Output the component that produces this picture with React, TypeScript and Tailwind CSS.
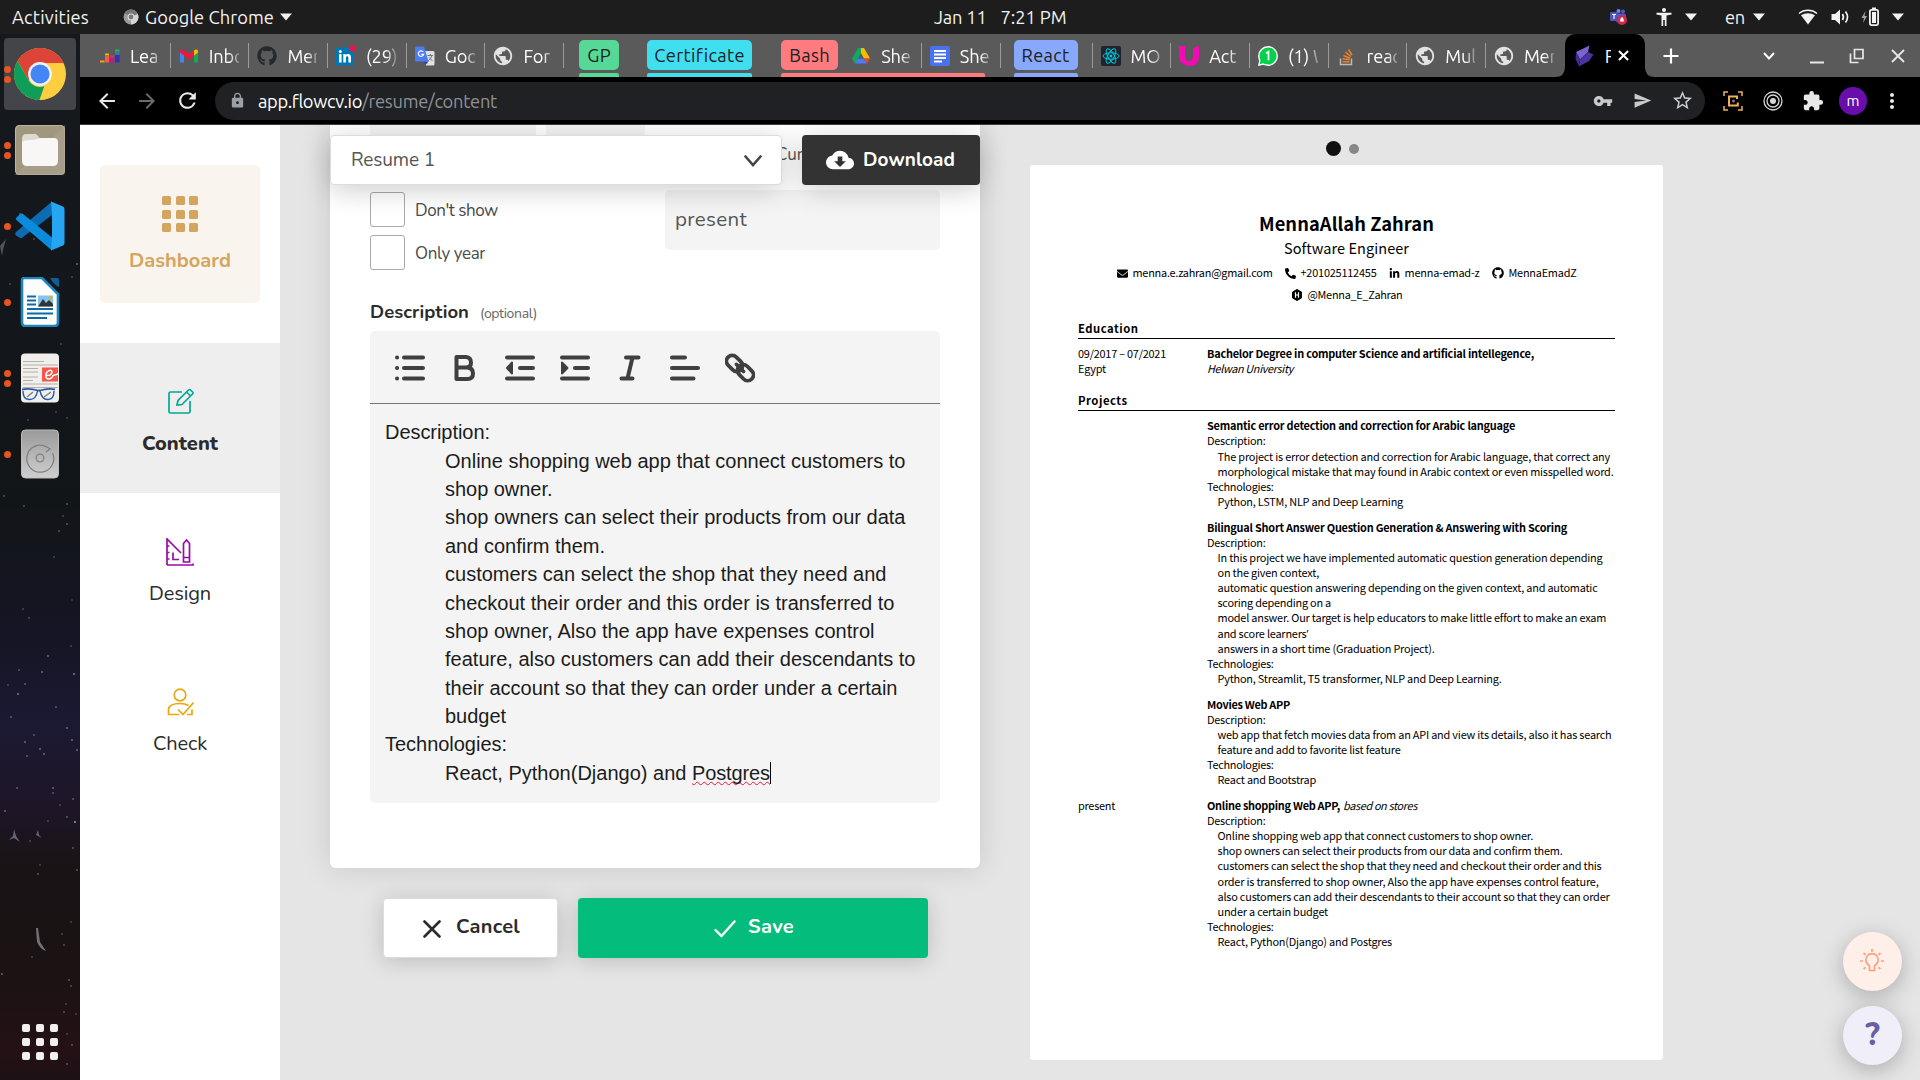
import { useLayoutEffect, useRef, useState } from "react";
import type { ReactNode } from "react";
import { FaGithub, FaPhoneAlt, FaLinkedinIn, FaEnvelope } from "react-icons/fa";
import {
  MdVpnKey,
  MdSend,
  MdStarBorder,
  MdExtension,
  MdMoreVert,
  MdLock,
  MdArrowBack,
  MdArrowForward,
  MdRefresh,
  MdPublic,
  MdCloudDownload,
} from "react-icons/md";

const UI = "font-['Nunito',Lato,sans-serif]";
const SYS = "font-['Ubuntu','Noto_Sans',sans-serif]";
const CV = "font-['Noto_Sans_CJK_SC',sans-serif]";

/* Single line of text whose tracking is adjusted so that it fills `w` pixels. */
function Fit({ w, className = "", children }: { w: number; className?: string; children: string }) {
  const ref = useRef<HTMLSpanElement>(null);
  const [ls, setLs] = useState(0);
  useLayoutEffect(() => {
    const el = ref.current;
    if (!el) return;
    el.style.letterSpacing = "0px";
    const natural = el.getBoundingClientRect().width;
    const next = (w - natural) / children.length;
    el.style.letterSpacing = `${next}px`;
    setLs(next);
  }, [w, children]);
  return (
    <span ref={ref} className={`inline-block whitespace-pre ${className}`} style={{ letterSpacing: `${ls}px` }}>
      {children}
    </span>
  );
}

function Caret({ className = "" }: { className?: string }) {
  return (
    <svg viewBox="0 0 12 8" className={`h-[8px] w-[12px] shrink-0 ${className}`}>
      <path d="M0 0.5H12L6 7.5Z" fill="#f2f2f2" />
    </svg>
  );
}

function TopBar() {
  return (
    <header className={`relative flex h-[34px] items-center bg-[#1d1d1d] text-[18.300px] leading-[34px] text-[#f2f2f2] ${SYS}`}>
      <Fit w={77} className="ml-[12px]">Activities</Fit>
      <svg viewBox="0 0 16 16" className="ml-[34px] h-[16px] w-[16px]">
        <circle cx="8" cy="8" r="7.5" fill="#9a9a9a" />
        <path d="M8 8L1.5 4A7.5 7.5 0 0 1 14.8 5Z" fill="#777" />
        <path d="M8 8L14.8 5A7.5 7.5 0 0 1 8 15.5Z" fill="#d5d5d5" />
        <circle cx="8" cy="8" r="3.5" fill="#ddd" />
        <circle cx="8" cy="8" r="2.4" fill="#777" />
      </svg>
      <Fit w={129} className="ml-[6px]">Google Chrome</Fit>
      <Caret className="ml-[6px]" />
      <div className="absolute left-[934px] top-0 flex gap-[14px]">
        <Fit w={52.5}>Jan 11</Fit>
        <Fit w={66}>7:21 PM</Fit>
      </div>
      <div className="ml-auto flex items-center pr-[16px]">
        <svg viewBox="0 0 18 16" className="h-[16px] w-[18px]">
          <circle cx="13" cy="2.6" r="2" fill="#5059c9" />
          <circle cx="8.5" cy="2" r="2" fill="#7b83eb" />
          <rect x="6" y="4.5" width="10" height="9" rx="2" fill="#5059c9" />
          <rect x="0" y="3" width="8" height="9" rx="1" fill="#4b53bc" />
          <path d="M2 5.5H6M4 5.5V10" stroke="#fff" strokeWidth="1.1" />
          <circle cx="12" cy="11" r="5" fill="#d0294a" />
          <path d="M9.8 12.6C10.5 12 10.2 8.3 12 8.3S13.5 12 14.2 12.6Z" fill="#fff" />
        </svg>
        <svg viewBox="0 0 16 18" className="ml-[28px] h-[18px] w-[16px]" fill="#f2f2f2">
          <circle cx="8" cy="2" r="2" />
          <path d="M0.5 4.8H15.5V6.6L10.5 7.4V18H8.8V12H7.2V18H5.5V7.4L0.5 6.6Z" />
        </svg>
        <Caret className="ml-[13px]" />
        <Fit w={20} className="ml-[28px]">en</Fit>
        <Caret className="ml-[8px]" />
        <svg viewBox="0 0 20 16" className="ml-[33px] h-[16px] w-[20px]">
          <path d="M1 4.5C6 0.2 14 0.2 19 4.5" fill="none" stroke="#f2f2f2" strokeWidth="1.6" />
          <path d="M3 6.3C7 3.4 13 3.4 17 6.3L10 15.5Z" fill="#f2f2f2" />
        </svg>
        <svg viewBox="0 0 20 16" className="ml-[13px] h-[16px] w-[20px]">
          <path d="M0.5 5H4L9 0.5V15.5L4 11H0.5Z" fill="#f2f2f2" />
          <path d="M11.5 5Q13.3 8 11.5 11M14.5 2.5Q18.5 8 14.5 13.5" fill="none" stroke="#f2f2f2" strokeWidth="1.7" />
        </svg>
        <svg viewBox="0 0 20 20" className="ml-[10px] h-[20px] w-[20px]">
          <path d="M4.5 4L0.5 11H3L2 16L6 9H3.5Z" fill="#a5a5a5" />
          <rect x="8.9" y="2.9" width="8.2" height="15.2" rx="1.5" fill="none" stroke="#f2f2f2" strokeWidth="1.8" />
          <rect x="11" y="5" width="4" height="11" fill="#f2f2f2" />
          <rect x="11" y="0.5" width="4" height="2" fill="#f2f2f2" />
        </svg>
        <Caret className="ml-[11px]" />
      </div>
    </header>
  );
}

/* ---------- Dock ---------- */

function ChromeLogo() {
  return (
    <svg viewBox="0 0 48 48" className="h-[52px] w-[52px]">
      <circle cx="24" cy="24" r="24" fill="#ffcd40" />
      <path d="M3.2 12A24 24 0 0 1 44.8 12L46 14H24L13.6 30Z" fill="#db4437" />
      <path d="M3.2 12L13.6 30A12 12 0 0 0 28 35.3L23.5 48A24 24 0 0 1 3.2 12Z" fill="#0f9d58" />
      <path d="M44.8 14H24V24L34 29L23.5 48A24 24 0 0 0 44.8 14Z" fill="#ffcd40" />
      <circle cx="24" cy="24" r="11" fill="#f1f1f1" />
      <circle cx="24" cy="24" r="8.8" fill="#4285f4" />
    </svg>
  );
}

function FilesIcon() {
  return (
    <svg viewBox="0 0 50 50" className="h-[50px] w-[50px]">
      <rect x="0.5" y="0.5" width="49" height="49" rx="3.5" fill="#a1977f" stroke="#bdb5a2" />
      <path d="M0 50L50 0V46.5Q50 50 46.5 50Z" fill="#aba28d" opacity=".6" />
      <path d="M7 14Q7 9 11 9H20Q22 9 23 11L25 14H33V24H7Z" fill="#dedad0" />
      <path d="M7 18Q7 16 10 15.5L21 14.5L25 13H39Q43 13 43 17V36Q43 41 38 41H12Q7 41 7 36Z" fill="#f8f7f5" />
    </svg>
  );
}

function CodeIcon() {
  return (
    <svg viewBox="0 0 50 50" className="h-[50px] w-[50px]">
      <path d="M1 31L37 0.5V14L6 37.5L1 34.5Q-0.5 33 1 31Z" fill="#0b6cb4" />
      <path d="M1 17L5.5 12.6Q7 12 8 13L37 36.5V49.5L2 19.5Q0 18 1 17Z" fill="#0a8bdc" />
      <path d="M36 0.5L48 5.5Q49.5 6.2 49.5 8V42Q49.5 43.8 48 44.5L36 49.5L37 37V14Z" fill="#25a5f2" />
    </svg>
  );
}

function WriterIcon() {
  return (
    <svg viewBox="0 0 40 50" className="h-[50px] w-[40px]">
      <path d="M4 1H22L38 17V45Q38 49 34.5 49H5Q2 49 2 45V4Q2 1 4 1Z" fill="#fdfdfd" stroke="#1c86bf" strokeWidth="2.6" />
      <path d="M30 1H37Q39 1 39 3V10Q34 8 30 1Z" fill="#0e5f95" />
      <path d="M7 19.5H16M7 23.5H16M7 27.5H16M7 32H33M7 36.5H33M7 41H27" stroke="#0e6ba8" strokeWidth="1.8" />
      <rect x="18" y="18.5" width="15" height="11" fill="#84c4ee" />
      <path d="M18 29.5L23 22L26 26L29 23L33 27V29.5Z" fill="#333" />
      <circle cx="30.5" cy="20.5" r="1.8" fill="#e8b500" />
    </svg>
  );
}

function EvinceIcon() {
  return (
    <svg viewBox="0 0 40 50" className="h-[50px] w-[40px]">
      <rect x="1" y="0.5" width="38" height="49" rx="4" fill="#f1efed" />
      <path d="M3 8.5H24M3 12H38M3 15.5H18M3 19H18M3 24H18M3 27.5H13M3 31H38M3 34.5H38" stroke="#b5afa5" strokeWidth="1.2" />
      <rect x="22" y="14.5" width="16" height="14" fill="#f3564b" />
      <path d="M25 22.5Q32 23 32 19Q31 15.5 27 19Q24 24 28 26Q32 26 33 22.5L38 21" fill="none" stroke="#fff" strokeWidth="1.5" />
      <path d="M2 36.5Q10 35 18 37.5H20Q28 35 35 36.5" fill="none" stroke="#2c5aa8" strokeWidth="1.8" />
      <path d="M3 38Q3 46.5 9 46.5Q16 47 17.5 38M20 38Q22 47 28 46.5Q34 46.5 34 38" fill="none" stroke="#2c5aa8" strokeWidth="1.4" />
      <path d="M7 44L13 39M24 44L31 39" stroke="#777" strokeWidth="1.2" />
    </svg>
  );
}

function DiskIcon() {
  return (
    <svg viewBox="0 0 40 50" className="h-[50px] w-[40px]">
      <defs>
        <linearGradient id="disk" x1="0" x2="0" y1="0" y2="1">
          <stop offset="0" stopColor="#9a9a9a" />
          <stop offset="1" stopColor="#cfcfcf" />
        </linearGradient>
      </defs>
      <rect x="1.5" y="1" width="37" height="48" rx="4" fill="url(#disk)" stroke="#bbb" />
      <path d="M32.500 24A13.500 13.500 0 1 1 27 18L30 20L26 23" fill="none" stroke="#808080" strokeWidth="1.3" />
      <circle cx="20" cy="29" r="3.8" fill="none" stroke="#808080" strokeWidth="1.3" />
    </svg>
  );
}

function DockItem({ dots, active, children }: { dots: number; active?: boolean; children: ReactNode }) {
  return (
    <div className="relative flex h-[76px] w-[80px] items-center justify-center">
      <div className={`flex h-[72px] w-[72px] items-center justify-center rounded-[4px] ${active ? "bg-[#434548]" : ""}`}>
        {children}
      </div>
      <div className="absolute left-[4px] top-0 flex h-full flex-col justify-center gap-[3px]">
        {Array.from({ length: dots }, (_, i) => (
          <span key={i} className="h-[7px] w-[7px] rounded-full bg-[#e95420]" />
        ))}
      </div>
    </div>
  );
}

const STARS = [
  [12, 20, 0.3], [62, 26, 0.25], [40, 119, 0.4], [20, 180, 0.35], [34, 205, 0.3], [77, 230, 0.5], [72, 243, 0.3], [10, 250, 0.3],
  [33, 264, 0.3], [61, 310, 0.3], [56, 378, 0.3], [28, 386, 0.3], [67, 384, 0.3], [4, 462, 0.35], [24, 472, 0.35], [67, 470, 0.4],
  [63, 482, 0.3], [67, 490, 0.4], [59, 497, 0.35], [54, 523, 0.3], [72, 566, 0.25], [23, 575, 0.3], [29, 584, 0.35], [71, 612, 0.3],
  [48, 622, 0.5], [19, 636, 0.4], [42, 638, 0.5], [74, 640, 0.6], [8, 651, 0.3], [25, 650, 0.4], [18, 660, 0.6], [56, 673, 0.4],
  [11, 683, 0.4], [67, 694, 0.5], [34, 701, 0.4], [25, 708, 0.5], [40, 715, 0.5], [72, 706, 0.5], [27, 722, 0.4], [44, 720, 0.5],
  [77, 716, 0.5], [17, 754, 0.4], [53, 754, 0.5], [53, 759, 0.4], [73, 765, 0.4], [60, 771, 0.3], [5, 777, 0.5], [67, 783, 0.4],
  [75, 788, 0.8], [48, 787, 0.3], [30, 807, 0.3], [73, 814, 0.4], [40, 831, 0.3], [38, 840, 0.4], [77, 836, 0.4], [71, 888, 0.3],
  [62, 900, 0.3], [64, 911, 0.35], [2, 940, 0.5], [69, 946, 0.4], [71, 952, 0.35], [66, 970, 0.3], [64, 978, 0.4], [76, 980, 0.3],
  [67, 1000, 0.3], [72, 1011, 0.4], [67, 1030, 0.4], [32, 923, 0.3],
];

function Dock() {
  return (
    <aside className="relative flex h-full w-[80px] shrink-0 flex-col bg-[linear-gradient(180deg,#15191d_0%,#121518_45%,#161525_58%,#1b1933_66%,#1e1629_73%,#191315_80%,#1a1213_90%,#241116_97%,#1d1115_100%)] pt-[2px]">
      <svg viewBox="0 0 80 1046" className="absolute left-0 top-0 h-[1046px] w-[80px]">
        {STARS.map(([x, y, o], i) => (
          <circle key={i} cx={x} cy={y} r="0.9" fill="#c9cbe8" opacity={o} />
        ))}
        <path d="M36 894L38 894L40 908L46 917Q40 915 37 908Z" fill="#8a8a90" opacity=".8" />
        <path d="M14 795L16 802L20 808L14 804L9 806L13 802ZM38 796L39 801L42 804L36 801Z" fill="#85859a" opacity=".7" />
        <path d="M0 212L6 205L3 216L2 222Z" fill="#8a9498" opacity=".5" />
      </svg>
      <DockItem dots={2} active><ChromeLogo /></DockItem>
      <DockItem dots={2}><FilesIcon /></DockItem>
      <DockItem dots={1}><CodeIcon /></DockItem>
      <DockItem dots={1}><WriterIcon /></DockItem>
      <DockItem dots={2}><EvinceIcon /></DockItem>
      <DockItem dots={1}><DiskIcon /></DockItem>
      <div className="relative mb-[20px] ml-[22px] mt-auto grid w-[36px] grid-cols-3 gap-[6px]">
        {Array.from({ length: 9 }, (_, i) => (
          <span key={i} className="h-[8px] w-[8px] rounded-[2px] bg-[#f0f0f0]" />
        ))}
      </div>
    </aside>
  );
}

/* ---------- Browser chrome ---------- */

const tabIcons: Record<string, ReactNode> = {
  deezer: (
    <svg viewBox="0 0 20 20" className="h-[20px] w-[20px]">
      <path d="M0 14.5H4.5V16.5H0Z" fill="#ff9a1f" />
      <path d="M5 10H9V16.5H5Z" fill="#f0603a" />
      <path d="M5 7.5H9V9.5H5Z" fill="#f7b500" />
      <path d="M10 12H14V16.5H10Z" fill="#c2159a" />
      <path d="M10 9.5H14V11.5H10Z" fill="#e0306a" />
      <path d="M15 9H19.5V16.5H15Z" fill="#3b2fb0" />
      <path d="M15 6H19.5V8.5H15Z" fill="#2a7fc0" />
      <path d="M15 3.5H19.5V5.5H15Z" fill="#1fb85a" />
    </svg>
  ),
  gmail: (
    <svg viewBox="0 0 20 20" className="h-[20px] w-[20px]">
      <path d="M1 5V16.500H5V9Z" fill="#4285f4" />
      <path d="M15 9V16.500H19V5Z" fill="#17a853" />
      <path d="M15 9.500L19 6.500V5Q18 2.500 15 4.500Z" fill="#fbbc04" />
      <path d="M1 5Q2 2.500 5 4.500L10 8.300L15 4.500V9.500L10 13.300L5 9.500L1 6.500Z" fill="#f5123d" />
    </svg>
  ),
  github: <FaGithub className="h-[20px] w-[20px] text-[#24292e]" />,
  linkedin: (
    <svg viewBox="0 0 20 20" className="h-[20px] w-[20px] overflow-visible">
      <rect x="0" y="1.5" width="18" height="18" rx="1.5" fill="#0077b5" />
      <path d="M3 8H5.600V16.500H3ZM7.300 8H9.800V9.200C10.800 7.200 15 7.200 15 11.200V16.500H12.400V12C12.400 9.600 9.900 9.800 9.900 12V16.500H7.300Z" fill="#fff" />
      <circle cx="4.3" cy="5.4" r="1.5" fill="#fff" />
      <circle cx="16.5" cy="2.5" r="3" fill="#f5123d" />
    </svg>
  ),
  translate: (
    <svg viewBox="0 0 20 20" className="h-[20px] w-[20px]">
      <path d="M8 5H18Q19.500 5 19.500 6.500V18Q19.500 19.500 18 19.500H11Z" fill="#e0e0e0" />
      <path d="M12.500 9.500H18M15.300 8V9.500M17 9.500Q16 13 13 15M14 11.500L17.500 15" stroke="#6b7787" strokeWidth="1" fill="none" />
      <path d="M1.500 0.500H9L13.500 15.500H1.500Q0 15.500 0 14V2Q0 0.500 1.500 0.500Z" fill="#4b7cf3" />
      <path d="M9.500 15.500H13.500L10.500 19Z" fill="#3b2fb0" />
      <path d="M8.300 6A2.700 2.700 0 1 0 8.700 8.300H6.300" fill="none" stroke="#fff" strokeWidth="1.2" />
    </svg>
  ),
  globe: <MdPublic className="h-[22px] w-[22px] shrink-0 text-[#e3e3e3]" />,
  drive: (
    <svg viewBox="0 0 20 20" className="h-[20px] w-[20px]">
      <path d="M7 2H13L19 12.500H13Z" fill="#ffba00" />
      <path d="M7 2H10V7.500L7.300 12.500L4 17.500L1 12.500Z" fill="#11a861" />
      <path d="M7.300 12.500H13L16 17.500H4Z" fill="#4a7cf5" />
      <path d="M13 12.500H19L16 17.500Z" fill="#ea4335" />
      <path d="M10 7.500L7.300 12.500H12.700Z" fill="#5a5a5a" />
    </svg>
  ),
  docs: (
    <svg viewBox="0 0 20 20" className="h-[20px] w-[20px]">
      <rect width="20" height="20" rx="2" fill="#4a72f0" />
      <path d="M4 5H16M4 8.500H16M4 12H16M4 15.500H12" stroke="#fff" strokeWidth="2" />
    </svg>
  ),
  react: (
    <svg viewBox="0 0 20 20" className="h-[20px] w-[20px]">
      <rect width="20" height="20" rx="2" fill="#20232a" />
      <g fill="none" stroke="#00c8e0" strokeWidth="1">
        <ellipse cx="10" cy="10" rx="8" ry="3.2" />
        <ellipse cx="10" cy="10" rx="8" ry="3.2" transform="rotate(60 10 10)" />
        <ellipse cx="10" cy="10" rx="8" ry="3.2" transform="rotate(120 10 10)" />
      </g>
      <circle cx="10" cy="10" r="1.5" fill="#00c8e0" />
    </svg>
  ),
  udacity: (
    <svg viewBox="0 0 20 20" className="h-[20px] w-[20px]">
      <path d="M0 0H6V10Q6 15 10 15Q14 15 14 10V2.500Q17 0 20 0V10Q20 20 10 20Q0 18 0 10Z" fill="#f40ab4" />
    </svg>
  ),
  whatsapp: (
    <svg viewBox="0 0 20 20" className="h-[20px] w-[20px]">
      <circle cx="10" cy="10" r="10" fill="#fff" />
      <path d="M0 20L1.500 13L7 18.500Z" fill="#fff" />
      <circle cx="10" cy="10" r="8.6" fill="#06d04b" />
      <path d="M1.700 18.300L2.700 13L6.500 17Z" fill="#06d04b" />
      <path d="M8 7.300L10.500 5.700V14.300" fill="none" stroke="#fff" strokeWidth="1.7" />
    </svg>
  ),
  stack: (
    <svg viewBox="0 0 20 20" className="h-[20px] w-[20px]">
      <path d="M3.500 12.500V18.500H14.500V12.500" fill="none" stroke="#bcbbbb" strokeWidth="1.5" />
      <path d="M5.500 15.700H12.500M5.700 12.800L12.600 13.800M6.500 9.500L13 12.200M8.500 6.200L13.800 10.500M11.500 3.500L15 9" stroke="#f48024" strokeWidth="1.5" />
    </svg>
  ),
  flow: (
    <svg viewBox="0 0 20 22" className="h-[22px] w-[20px]">
      <path d="M1 7L14.500 0.500L13 7L5 14.500Z" fill="#7a63cc" />
      <path d="M13 7L18.500 9.500L14 16L4 21.500L5 14.500Z" fill="#4a34a0" />
      <path d="M1 7L5 14.500L4 21.500L0.500 14Z" fill="#412c90" />
    </svg>
  ),
};

function Tab({ icon, label, last }: { icon: string; label: string; last?: boolean }) {
  return (
    <div className="flex h-[43px] w-[78.700px] shrink-0 items-center pl-[8px]">
      <span className="flex w-[20px] shrink-0 justify-center">{tabIcons[icon]}</span>
      <span className="ml-[10px] w-[30px] overflow-hidden whitespace-nowrap text-[18.300px] tracking-[-0.200px] text-white [mask-image:linear-gradient(90deg,#000_65%,transparent_115%)]">
        {label}
      </span>
      <span className={`ml-auto h-[25px] w-px ${last ? "" : "bg-[#9b9b9b]"}`} />
    </div>
  );
}

function Group({ label, w, chip, line, lineWidth }: { label: string; w: number; chip: string; line: string; lineWidth: string }) {
  return (
    <div className="relative h-[43px] shrink-0 pt-[6px]">
      <div className={`flex h-[30px] items-center justify-center rounded-[5px] text-[18.300px] text-[#202124] ${chip}`}>
        <Fit w={w}>{label}</Fit>
      </div>
      <div className={`absolute bottom-0 left-0 h-[4px] rounded-t-[2px] ${line} ${lineWidth}`} />
    </div>
  );
}

function TabStrip() {
  return (
    <div className={`flex h-[43px] items-center bg-[#5a5a5a] pl-[12px] leading-[24px] ${SYS}`}>
      <Tab icon="deezer" label="Lea" />
      <Tab icon="gmail" label="Inbo" />
      <Tab icon="github" label="Men" />
      <Tab icon="linkedin" label="(29)" />
      <Tab icon="translate" label="Goo" />
      <Tab icon="globe" label="For" />
      <div className="ml-[15px]" />
      <Group label="GP" w={24} chip="w-[40px] bg-[#56d896]" line="bg-[#56d896]" lineWidth="w-[40px]" />
      <div className="ml-[28px]" />
      <Group label="Certificate" w={90} chip="w-[105px] bg-[#3fdfef]" line="bg-[#3fdfef]" lineWidth="w-[105px]" />
      <div className="ml-[29px]" />
      <Group label="Bash" w={41} chip="w-[57px] bg-[#ff7b80]" line="bg-[#ff7b80]" lineWidth="w-[204px]" />
      <div className="ml-[5px]" />
      <Tab icon="drive" label="She" />
      <Tab icon="docs" label="She" />
      <div className="ml-[13px]" />
      <Group label="React" w={48} chip="w-[64px] bg-[#88a8fb]" line="bg-[#88a8fb]" lineWidth="w-[64px]" />
      <span className="ml-[14px] h-[25px] w-px shrink-0 bg-[#9b9b9b]" />
      <Tab icon="react" label="MO" />
      <Tab icon="udacity" label="Act" />
      <Tab icon="whatsapp" label="(1) W" />
      <Tab icon="stack" label="reac" />
      <Tab icon="globe" label="Mul" />
      <Tab icon="globe" label="Men" last />
      <div className="relative flex h-[43px] w-[80px] shrink-0 items-center rounded-t-[10px] bg-black pl-[10px]">
        <svg viewBox="0 0 10 10" className="absolute -left-[10px] bottom-0 h-[10px] w-[10px]"><path d="M0 10Q10 10 10 0V10Z" /></svg>
        <svg viewBox="0 0 10 10" className="absolute -right-[10px] bottom-0 h-[10px] w-[10px]"><path d="M10 10Q0 10 0 0V10Z" /></svg>
        {tabIcons.flow}
        <span className="ml-[10px] w-[6px] overflow-hidden text-[18.300px] text-white">F</span>
        <svg viewBox="0 0 12 12" className="ml-[7px] h-[11px] w-[11px]"><path d="M1 1L11 11M11 1L1 11" stroke="#fff" strokeWidth="2.2" /></svg>
      </div>
      <svg viewBox="0 0 16 16" className="ml-[18px] h-[16px] w-[16px] shrink-0"><path d="M8 0.500V15.500M0.500 8H15.500" stroke="#fff" strokeWidth="2.2" /></svg>
      <svg viewBox="0 0 12 8" className="ml-[84px] h-[8px] w-[12px] shrink-0"><path d="M1 1L6 6.500L11 1" fill="none" stroke="#fff" strokeWidth="2" /></svg>
      <svg viewBox="0 0 14 16" className="ml-[35px] h-[16px] w-[14px] shrink-0"><path d="M0 14.500H14" stroke="#e8e8e8" strokeWidth="2" /></svg>
      <svg viewBox="0 0 16 16" className="ml-[25px] h-[16px] w-[16px] shrink-0"><path d="M5.500 1.500H14V10.500H5.500ZM1.500 5.500V14.500H9.500" fill="none" stroke="#e8e8e8" strokeWidth="1.7" /></svg>
      <svg viewBox="0 0 14 14" className="ml-[26px] h-[14px] w-[14px] shrink-0"><path d="M1 1L13 13M13 1L1 13" stroke="#e8e8e8" strokeWidth="1.8" /></svg>
    </div>
  );
}

function Toolbar() {
  return (
    <div className={`flex h-[48px] items-center border-b border-[#3c3c3c] bg-black pl-[15px] text-[#e8e8e8] ${SYS}`}>
      <MdArrowBack className="h-[24px] w-[24px]" />
      <MdArrowForward className="ml-[16px] h-[24px] w-[24px] text-[#6b6b6b]" />
      <MdRefresh className="ml-[16px] h-[25px] w-[25px]" />
      <div className="ml-[15px] flex h-[38px] w-[1490px] items-center rounded-full bg-[#202124] pl-[14px] pr-[11px] text-[18.300px] leading-[38px]">
        <MdLock className="h-[17px] w-[17px] text-[#9aa0a6]" />
        <Fit w={104} className="ml-[12px] text-white">app.flowcv.io</Fit>
        <Fit w={135} className="text-[#8f9296]">/resume/content</Fit>
        <MdVpnKey className="ml-auto h-[20px] w-[20px] text-[#c9cacc]" />
        <MdSend className="ml-[20px] h-[19px] w-[19px] text-[#c9cacc]" />
        <MdStarBorder className="ml-[19px] h-[23px] w-[23px] text-[#c9cacc]" />
      </div>
      <svg viewBox="0 0 20 20" className="ml-[18px] h-[20px] w-[20px] shrink-0">
        <path d="M1 5V1H5M15 1H19V5M19 15V19H15M5 19H1V15" fill="none" stroke="#eeb05f" strokeWidth="1.5" />
        <path d="M14 8V5.500H6V14.500H14.800V11.500" fill="none" stroke="#eeb05f" strokeWidth="2" />
        <circle cx="10.5" cy="10" r="1.5" fill="#777" />
      </svg>
      <svg viewBox="0 0 20 20" className="ml-[20px] h-[20px] w-[20px] shrink-0">
        <g fill="none" stroke="#d5d5d5" strokeWidth="1.3"><circle cx="10" cy="10" r="9" /><circle cx="10" cy="10" r="6" /></g>
        <circle cx="10" cy="10" r="3" fill="#d5d5d5" />
      </svg>
      <MdExtension className="ml-[19px] h-[22px] w-[22px] shrink-0" />
      <span className="ml-[15px] flex h-[28px] w-[28px] shrink-0 items-center justify-center rounded-full bg-[#6a0dad] text-[15px] leading-[28px] text-white">m</span>
      <MdMoreVert className="ml-[13px] h-[24px] w-[24px] shrink-0" />
    </div>
  );
}

/* ---------- Page navigation ---------- */

function NavPane() {
  return (
    <nav className={`flex w-[200px] shrink-0 flex-col bg-white text-[20px] leading-[26px] text-[#2b2b2b] ${UI}`}>
      <div className="mx-[20px] mt-[40px] flex h-[138px] flex-col items-center rounded-[5px] bg-[#f9f4ed] pt-[31px] font-bold text-[#d4a55f]">
        <div className="grid grid-cols-3 gap-[4.500px]">
          {Array.from({ length: 9 }, (_, i) => (
            <span key={i} className="h-[9px] w-[9px] rounded-[1.500px] bg-[#d4a55f]" />
          ))}
        </div>
        <Fit w={102} className="mt-[16px]">Dashboard</Fit>
      </div>
      <div className="mt-[40px] flex h-[150px] flex-col items-center bg-[#eeeeee] pt-[45px] font-extrabold">
        <svg viewBox="0 0 26 26" className="ml-px h-[26px] w-[26px]" fill="none" stroke="#00a896" strokeWidth="1.7">
          <path d="M14 4H2.500Q1 4 1 5.500V23.500Q1 25 2.500 25H20.500Q22 25 22 23.500V13" />
          <path d="M9 17L10 12.500L20.500 2Q21.500 1 22.500 2L24.500 4Q25.500 5 24.500 6L14 16.500ZM18.500 4L22.500 8" />
        </svg>
        <Fit w={76} className="mt-[17px]">Content</Fit>
      </div>
      <div className="flex h-[150px] flex-col items-center pt-[45px]">
        <svg viewBox="0 0 28 28" className="h-[28px] w-[28px]" fill="none" stroke="#9a0aa5" strokeWidth="1.7">
          <path d="M1 27V1L15 15M1 27H27V25.500M1 8H3.500M1 14.500H3.500M1 21H3.500M7 14.500V21.500H13" />
          <path d="M17.500 5.500L20.500 2L23.500 5.500V24H17.500ZM17.500 19.500H23.500" />
        </svg>
        <Fit w={62} className="mt-[15px]">Design</Fit>
      </div>
      <div className="flex h-[150px] flex-col items-center pt-[45px]">
        <svg viewBox="0 0 28 28" className="h-[28px] w-[28px]" fill="none" stroke="#eaa70b" strokeWidth="1.7">
          <circle cx="14" cy="7" r="5.8" />
          <path d="M13 26.500H2.500V21.500Q3 15.500 14 15.500Q19.500 15.500 22.500 17.500M26 21.500V26.500H21" />
          <path d="M12 21.500L17 26.500L27.500 14.500" />
        </svg>
        <Fit w={54} className="mt-[15px]">Check</Fit>
      </div>
    </nav>
  );
}

/* ---------- Editor ---------- */

function FormatBar() {
  return (
    <div className="flex h-[73px] items-center gap-[25px] border-b border-[#777] pl-[25px] pt-[2px] text-[#3f3f3f]">
      <svg viewBox="0 0 30 30" className="h-[30px] w-[30px]" fill="none" stroke="currentColor" strokeWidth="4" strokeLinecap="round">
        <path d="M9 4.500H28M9 15H28M9 25.500H28M2 4.500H2.100M2 15H2.100M2 25.500H2.100" />
      </svg>
      <svg viewBox="0 0 30 30" className="h-[30px] w-[30px]" fill="none" stroke="currentColor" strokeWidth="4" strokeLinejoin="round">
        <path d="M6.500 4H16Q21 4.500 21 9.500T16 14.500H6.500ZM6.500 14.500H17.500Q23 15 23 20.500T17.500 26H6.500Z" />
      </svg>
      <svg viewBox="0 0 30 30" className="h-[30px] w-[30px]" fill="none" stroke="currentColor" strokeWidth="4" strokeLinecap="round">
        <path d="M2 4.500H28M15 15H28M2 25.500H28" />
        <path d="M7 9.500V20.500L2 15Z" fill="currentColor" strokeWidth="2" strokeLinejoin="round" />
      </svg>
      <svg viewBox="0 0 30 30" className="h-[30px] w-[30px]" fill="none" stroke="currentColor" strokeWidth="4" strokeLinecap="round">
        <path d="M2 4.500H28M15 15H28M2 25.500H28" />
        <path d="M2 9.500V20.500L7.500 15Z" fill="currentColor" strokeWidth="2" strokeLinejoin="round" />
      </svg>
      <svg viewBox="0 0 30 30" className="h-[30px] w-[30px]" fill="none" stroke="currentColor" strokeWidth="4" strokeLinecap="round">
        <path d="M11 4.500H23.500M6.500 25.500H17.500M17.500 4.500L12.500 25.500" />
      </svg>
      <svg viewBox="0 0 30 30" className="h-[30px] w-[30px]" fill="none" stroke="currentColor" strokeWidth="4" strokeLinecap="round">
        <path d="M2 4.500H15M2 15H28M2 25.500H23.500" />
      </svg>
      <svg viewBox="0 0 30 30" className="h-[30px] w-[30px]" fill="none" stroke="currentColor" strokeWidth="3.8" strokeLinecap="round">
        <rect x="0.5" y="4.7" width="18" height="11.5" rx="5.75" transform="rotate(45 9.5 10.5)" />
        <rect x="11.5" y="13.9" width="18" height="11.5" rx="5.75" transform="rotate(45 20.5 19.5)" />
        <path d="M11.500 11.500L18.500 18.500" />
      </svg>
    </div>
  );
}

const LINES: [string, number, boolean][] = [
  ["Description:", 105, false],
  ["Online shopping web app that connect customers to", 460.5, true],
  ["shop owner.", 107.5, true],
  ["shop owners can select their products from our data", 460.5, true],
  ["and confirm them.", 160, true],
  ["customers can select the shop that they need and", 441.5, true],
  ["checkout their order and this order is transferred to", 449.5, true],
  ["shop owner, Also the app have expenses control", 429.5, true],
  ["feature, also customers can add their descendants to", 470.5, true],
  ["their account so that they can order under a certain", 452.5, true],
  ["budget", 61, true],
  ["Technologies:", 122, false],
];

function CheckRow({ label, w }: { label: string; w: number }) {
  return (
    <div className="flex items-center">
      <span className="h-[35px] w-[35px] rounded-[3px] border border-[#a9a9a9] bg-white" />
      <Fit w={w} className="ml-[10px] mt-[3px] text-[17px] text-[#4a4a4a]">{label}</Fit>
    </div>
  );
}

function FormPane() {
  return (
    <section className={`relative ml-[50px] w-[650px] shrink-0 ${UI}`}>
      <div className="h-[743px] rounded-b-[6px] bg-white px-[40px] shadow-[0_0_30px_rgba(0,0,0,0.13)]">
        <div className="flex h-[65px] items-start">
          <span className="h-[16px] w-[166px] bg-[#f4f4f4]" />
          <span className="ml-[10px] h-[16px] w-[99px] bg-[#f4f4f4]" />
          <span className="ml-[131px] mt-[18px] text-[17px] leading-[24px] text-[#555]">Current</span>
        </div>
        <div className="flex justify-between">
          <div className="flex flex-col gap-[8px] pt-[2px]">
            <CheckRow label="Don't show" w={83} />
            <CheckRow label="Only year" w={70} />
          </div>
          <div className="flex h-[60px] w-[275px] items-center rounded-[5px] bg-[#f4f4f4] pb-[2px] pl-[10px] text-[20.500px] leading-[26px] text-[#555]">
            <Fit w={72}>present</Fit>
          </div>
        </div>
        <div className="mt-[28px] flex h-[28px] items-center">
          <Fit w={99} className="mt-[2px] text-[18.500px] font-bold text-[#2b2b2b]">Description</Fit>
          <Fit w={57} className="ml-[11px] mt-[3px] text-[14px] text-[#666]">(optional)</Fit>
        </div>
        <div className="mt-[5px] h-[472px] rounded-[5px] bg-[#f4f4f4]">
          <FormatBar />
          <div className="px-[15px] pt-[14.200px] font-['Liberation_Sans',sans-serif] text-[20px] leading-[28.400px] text-[#1c1c1c]">
            {LINES.map(([text, w, indent]) => (
              <div key={text} className={`flex h-[28.400px] ${indent ? "pl-[60px]" : ""}`}>
                <Fit w={w}>{text}</Fit>
              </div>
            ))}
            <div className="flex h-[28.400px] items-center pl-[60px]">
              <Fit w={247}>{"React, Python(Django) and "}</Fit>
              <Fit w={78} className="underline decoration-[#f0143c] decoration-wavy decoration-[1.300px] underline-offset-[1px] [text-decoration-skip-ink:none]">Postgres</Fit>
              <span className="h-[22px] w-px bg-black" />
            </div>
          </div>
        </div>
      </div>

      <div className="ml-[53px] mt-[30px] flex gap-[20px] text-[20px] font-bold leading-[26px]">
        <button className="flex h-[60px] w-[175px] items-center justify-center rounded-[4px] border border-[#dcdcdc] bg-white pb-[2px] pl-[2px] text-[#2b2b2b] shadow-[0_3px_22px_rgba(0,0,0,0.18)]">
          <svg viewBox="0 0 18 18" className="mt-[4px] h-[18px] w-[18px]"><path d="M1.500 1.500L16.500 16.500M16.500 1.500L1.500 16.500" stroke="currentColor" strokeWidth="2.6" strokeLinecap="round" /></svg>
          <Fit w={64} className="ml-[15px]">Cancel</Fit>
        </button>
        <button className="flex h-[60px] w-[350px] items-center justify-center rounded-[4px] bg-[#04bd7c] pb-[2px] pl-[2px] text-white shadow-[0_3px_22px_rgba(0,0,0,0.18)]">
          <svg viewBox="0 0 22 18" className="mt-[4px] h-[18px] w-[22px]"><path d="M1.500 10L7.500 16L20.500 1.500" fill="none" stroke="currentColor" strokeWidth="2.4" strokeLinecap="round" /></svg>
          <Fit w={46} className="ml-[12px]">Save</Fit>
        </button>
      </div>

      <div className="absolute left-0 right-0 top-[10px] flex justify-between">
        <div className="flex h-[50px] w-[452px] items-center justify-between rounded-[4px] border border-[#dcdcdc] bg-white pl-[20px] pr-[19px] text-[19px] leading-[26px] text-[#555] shadow-[0_5px_28px_rgba(0,0,0,0.2)]">
          <Fit w={84}>Resume 1</Fit>
          <svg viewBox="0 0 18 12" className="mt-[2px] h-[12px] w-[18px]"><path d="M1.500 1.500L9 10L16.500 1.500" fill="none" stroke="#444" strokeWidth="2.6" strokeLinecap="round" /></svg>
        </div>
        <div className="flex h-[50px] w-[178px] items-center justify-center rounded-[4px] bg-[#333] pr-px text-[19px] font-bold leading-[26px] text-white shadow-[0_5px_28px_rgba(0,0,0,0.2)]">
          <MdCloudDownload className="h-[28px] w-[28px]" />
          <Fit w={92} className="ml-[9px]">Download</Fit>
        </div>
      </div>
    </section>
  );
}

/* ---------- Resume preview ---------- */

type Entry = { date?: string; title: string; w: number; note?: string; lines: [string, number, boolean][] };

const DESC: [string, number, boolean] = ["Description:", 58.5, false];
const TECH: [string, number, boolean] = ["Technologies:", 66.6, false];

const ENTRIES: Entry[] = [
  {
    title: "Semantic error detection and correction for Arabic language",
    w: 308,
    lines: [
      DESC,
      ["The project is error detection and correction for Arabic language, that correct any", 392.5, true],
      ["morphological mistake that may found in Arabic context or even misspelled word.", 396, true],
      TECH,
      ["Python, LSTM, NLP and Deep Learning", 185.5, true],
    ],
  },
  {
    title: "Bilingual Short Answer Question Generation & Answering with Scoring",
    w: 360,
    lines: [
      DESC,
      ["In this project we have implemented automatic question generation depending", 385, true],
      ["on the given context,", 101.5, true],
      ["automatic question answering depending on the given context, and automatic", 380, true],
      ["scoring depending on a", 113.5, true],
      ["model answer. Our target is help educators to make little effort to make an exam", 388.5, true],
      ["and score learners\u2019", 92, true],
      ["answers in a short time (Graduation Project).", 217, true],
      TECH,
      ["Python, Streamlit, T5 transformer, NLP and Deep Learning.", 284, true],
    ],
  },
  {
    title: "Movies Web APP",
    w: 83,
    lines: [
      DESC,
      ["web app that fetch movies data from an API and view its details, also it has search", 394, true],
      ["feature and add to favorite list feature", 183, true],
      TECH,
      ["React and Bootstrap", 98.5, true],
    ],
  },
  {
    date: "present",
    title: "Online shopping Web APP,",
    w: 133,
    note: "based on stores",
    lines: [
      DESC,
      ["Online shopping web app that connect customers to shop owner.", 315.5, true],
      ["shop owners can select their products from our data and confirm them.", 345, true],
      ["customers can select the shop that they need and checkout their order and this", 384, true],
      ["order is transferred to shop owner, Also the app have expenses control feature,", 381, true],
      ["also customers can add their descendants to their account so that they can order", 392, true],
      ["under a certain budget", 110.5, true],
      TECH,
      ["React, Python(Django) and Postgres", 174.5, true],
    ],
  },
];

/* The typographic apostrophe is set from a proportional Latin face. */
function CvText({ text, w, className = "" }: { text: string; w: number; className?: string }) {
  if (!text.endsWith("\u2019")) return <Fit w={w} className={className}>{text}</Fit>;
  return (
    <span className={`flex ${className}`}>
      <Fit w={w - 3}>{text.slice(0, -1)}</Fit>
      <span className="font-['Open_Sans',sans-serif]">{"\u2019"}</span>
    </span>
  );
}

function Contact({ icon, label, w }: { icon: ReactNode; label: string; w: number }) {
  return (
    <span className="flex h-[22px] items-center gap-[5px]">
      {icon}
      <Fit w={w}>{label}</Fit>
    </span>
  );
}

function SectionTitle({ label, w }: { label: string; w: number }) {
  return (
    <h2 className="flex h-[19px] border-b border-black text-[11.300px] font-bold leading-[16px]">
      <Fit w={w}>{label}</Fit>
    </h2>
  );
}

function Resume() {
  return (
    <section className="ml-[50px] flex w-[633px] shrink-0 flex-col">
      <div className="flex h-[40px] items-center gap-[8px] pl-[296px] pt-[7px]">
        <span className="h-[15px] w-[15px] rounded-full bg-[#111]" />
        <span className="h-[10px] w-[10px] rounded-full bg-[#888]" />
      </div>
      <article className={`h-[895px] rounded-[3px] bg-white px-[48px] pt-[44px] text-[10.900px] leading-[15.150px] text-black ${CV}`}>
        <div className="flex flex-col items-center">
          <Fit w={175} className="text-[18.300px] font-bold leading-[28px]">MennaAllah Zahran</Fit>
          <Fit w={125} className="text-[14.500px] leading-[22px]">Software Engineer</Fit>
        </div>
        <div className="mt-[3px] flex justify-center gap-[12px]">
          <Contact icon={<FaEnvelope className="h-[11px] w-[11px]" />} label="menna.e.zahran@gmail.com" w={140} />
          <Contact icon={<FaPhoneAlt className="h-[11px] w-[11px]" />} label="+201025112455" w={76} />
          <Contact icon={<FaLinkedinIn className="h-[11px] w-[11px]" />} label="menna-emad-z" w={75} />
          <Contact icon={<FaGithub className="h-[12px] w-[12px]" />} label="MennaEmadZ" w={68} />
        </div>
        <div className="flex justify-center">
          <Contact
            icon={
              <svg viewBox="0 0 12 12" className="h-[12px] w-[12px]">
                <path d="M6 0.500L10.500 3V9L6 11.500L1.500 9V3Z" stroke="#000" strokeLinejoin="round" />
                <path d="M4.500 3.200V8.800M7.500 3.200V8.800M4.500 6H7.500" stroke="#fff" strokeWidth="1.2" />
              </svg>
            }
            label="@Menna_E_Zahran"
            w={95}
          />
        </div>
        <div className="mt-[14px]">
          <SectionTitle label="Education" w={60.5} />
          <div className="mt-[7px] flex">
            <div className="flex w-[129px] flex-col items-start">
              <Fit w={88}>09/2017 – 07/2021</Fit>
              <Fit w={28}>Egypt</Fit>
            </div>
            <div className="flex flex-col items-start">
              <Fit w={327} className="font-bold">Bachelor Degree in computer Science and artificial intellegence,</Fit>
              <Fit w={86} className="italic">Helwan University</Fit>
            </div>
          </div>
        </div>
        <div className="mt-[16px]">
          <SectionTitle label="Projects" w={49.5} />
          <div className="mt-[7px] flex flex-col gap-[10.300px]">
            {ENTRIES.map((e) => (
              <div key={e.title} className="flex">
                <div className="w-[129px]">{e.date && <Fit w={37}>{e.date}</Fit>}</div>
                <div className="flex flex-col items-start">
                  <div className="flex gap-[3px]">
                    <Fit w={e.w} className="font-bold">{e.title}</Fit>
                    {e.note && <Fit w={74} className="italic">{e.note}</Fit>}
                  </div>
                  {e.lines.map(([text, w, indent]) => (
                    <CvText key={text} text={text} w={w} className={indent ? "ml-[10.500px]" : ""} />
                  ))}
                </div>
              </div>
            ))}
          </div>
        </div>
      </article>
    </section>
  );
}

function FloatingActions() {
  return (
    <div className={`absolute bottom-[15px] right-[18px] flex flex-col gap-[15px] ${UI}`}>
      <span className="flex h-[59px] w-[59px] items-center justify-center rounded-full bg-[#ffefe9] shadow-[0_5px_22px_rgba(0,0,0,0.25)]">
        <svg viewBox="0 0 24 24" className="mb-px mr-px h-[24px] w-[24px]" fill="none" stroke="#ff9f7c" strokeWidth="1.7">
          <path d="M9.500 17.500Q9.500 16.500 8 15.500A6.200 6.200 0 1 1 16 15.500Q14.500 16.500 14.500 17.500V21.500H9.500Z" />
          <path d="M12 0V3M0 12H3M21 12H24M3.500 4L5.500 5.800M20.500 4L18.500 5.800M3.500 20L5.500 18.300M20.500 20L18.500 18.300" />
        </svg>
      </span>
      <span className="flex h-[59px] w-[59px] items-center justify-center rounded-full bg-[#f0eff9] text-[31px] font-extrabold leading-none text-[#6a5ea6] shadow-[0_5px_22px_rgba(0,0,0,0.25)]">?</span>
    </div>
  );
}

export default function App() {
  return (
    <div className="flex h-[1080px] w-[1920px] flex-col overflow-hidden">
      <TopBar />
      <div className="flex h-[1046px]">
        <Dock />
        <div className="flex w-[1840px] flex-col">
          <TabStrip />
          <Toolbar />
          <main className="relative flex h-[955px] overflow-hidden bg-[#e5e5e5]">
            <NavPane />
            <FormPane />
            <Resume />
            <FloatingActions />
          </main>
        </div>
      </div>
    </div>
  );
}
